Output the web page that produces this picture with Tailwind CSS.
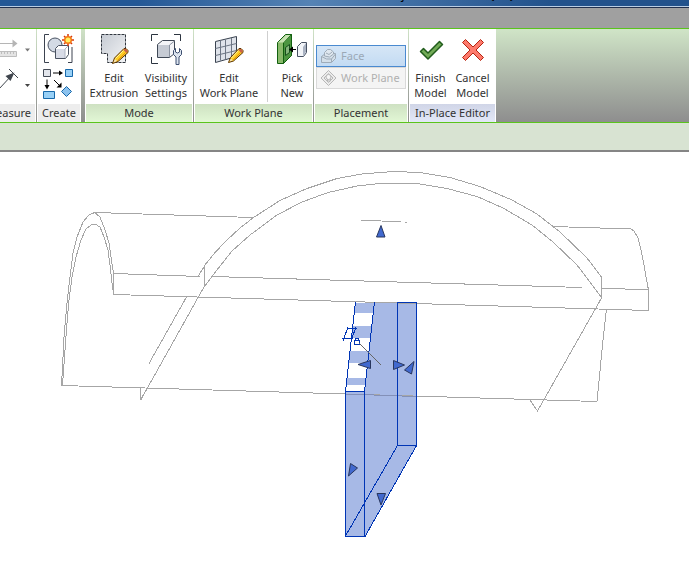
<!DOCTYPE html>
<html lang="en">
<head>
    <meta charset="UTF-8">
    <meta name="viewport" content="width=device-width, initial-scale=1.0">
    <title>Project1 - 3D View: {3D}</title>
    <script src="https://cdn.jsdelivr.net/npm/@tailwindcss/browser@4"></script>
</head>
<body class="bg-white overflow-x-hidden text-[11px] text-[#333333] font-['Noto_Sans','Open_Sans',sans-serif]">
    <!-- title bar -->
    <header class="h-2 flex items-end justify-center pb-1 overflow-hidden bg-linear-to-r from-[#245896] from-20% via-[#5583b5] via-45% to-[#22528c] to-80% border-b border-[#22304d] shadow-[inset_0_-1px_#b9cde4]">
        <span class="pl-52 leading-4 text-xs text-black whitespace-nowrap">Project1 - 3D View: {3D}</span>
    </header>
    <div class="h-5 bg-[#a0a0a0]"></div>

    <!-- ribbon -->
    <nav class="flex overflow-hidden border-y border-[#5ac41c] bg-linear-to-b from-[#d0e5c7] to-[#8e8e8e]">
        <section class="w-9 shrink-0 flex flex-col bg-white">
            <div class="flex-1">
                <button class="block" aria-label="Measure">
                    <svg class="w-9 h-9" viewBox="0 0 36 36" fill="none">
                        <path d="M0 14.500H13" stroke="#b5b5b5"/>
                        <path d="M12.500 10.500v8l5-4z" fill="#b5b5b5"/>
                        <path d="M-2 22.500H16.500v5H-2z" fill="#e4e4e4" stroke="#bdbdbd"/>
                        <path d="M1.500 23v2M4.500 23v2M7.500 23v2M10.500 23v2M13.500 23v2" stroke="#bdbdbd"/>
                        <path d="M25 19.500h5l-2.500 3z" fill="#777"/>
                    </svg>
                </button>
                <button class="block" aria-label="Aligned dimension">
                    <svg class="w-9 h-9" viewBox="0 0 36 36" fill="none">
                        <path d="M-1 24L12 10M9 4l9 9" stroke="#3f454d"/>
                        <path d="M14.500 7.500L5.500 11l5 5z" fill="#3f454d"/>
                        <path d="M25 19h5l-2.500 3z" fill="#444"/>
                    </svg>
                </button>
            </div>
            <h2 class="flex justify-end pr-1 mr-px leading-[18px] bg-[#ededed] whitespace-nowrap">Measure</h2>
        </section>
        <div class="w-px shrink-0 bg-linear-to-b from-[#cfe2c6] to-[#8e8e8e]"></div>

        <section class="w-11 shrink-0 flex flex-col bg-white px-px">
            <div class="flex-1 flex flex-col items-center">
                <button class="pt-1" aria-label="Create">
                    <svg class="w-8 h-8" viewBox="0 0 32 32" fill="none">
                        <path d="M6 1.500H1.500v28H6M25 29.500h4V14" stroke="#3c4350"/>
                        <circle cx="12" cy="12" r="7" fill="#d3dae5" stroke="#4a5362"/>
                        <path d="M12.500 15.500l3-3h10v9l-3 4h-10z" fill="#fff" stroke="#4a5362"/>
                        <path d="M13 16h9v9h-9z" fill="#d8dce7"/>
                        <path d="M22 16v9M22 16l3-3" stroke="#aeb5c2"/>
                        <path d="M25 1v12M19 7h12M21 3l8 8M29 3l-8 8" stroke="#d8380c" stroke-width="1.500"/>
                        <circle cx="25" cy="7" r="4" fill="#f47a12"/>
                        <circle cx="25" cy="7" r="2.500" fill="#ffef62"/>
                    </svg>
                </button>
                <button class="pt-1" aria-label="Component">
                    <svg class="w-8 h-8" viewBox="0 0 32 32" fill="none">
                        <path d="M.5.500h7v7h-7z" fill="#e3e6ec" stroke="#434a56"/>
                        <path d="M22.500.500h7v7h-7z" fill="#98d0f6" stroke="#1768aa"/>
                        <path d="M.5 22.500h11v7h-11z" fill="#98d0f6" stroke="#1768aa"/>
                        <path d="M23.500 17.500l5 5-5 5-5-5z" fill="#8cc2ee" stroke="#1768aa"/>
                        <path d="M10 4h7M4 10.500v7M11 11l5 5" stroke="#000"/>
                        <path d="M16 1.500l4 2.500-4 2.500zM1.500 16h5l-2.500 4.500zM18.500 18.500v-5l-5 5z" fill="#000"/>
                    </svg>
                </button>
            </div>
            <h2 class="text-center leading-[18px] bg-[#ededed]">Create</h2>
        </section>
        <div class="w-1 shrink-0 bg-linear-to-b from-[#cfe2c6] to-[#8e8e8e]"></div>

        <section class="w-27 shrink-0 flex flex-col bg-white px-px">
            <div class="flex-1 flex justify-center gap-1 pt-1 pb-1 pl-0.5">
                <button class="w-12 flex flex-col items-center gap-[5px] leading-[15px]">
                    <svg class="w-8 h-8" viewBox="0 0 32 32" fill="none">
                        <defs><linearGradient id="sheet" x2="1" y2="1"><stop stop-color="#c6cbd3"/><stop offset="1" stop-color="#f3f4f6"/></linearGradient></defs>
                        <path d="M3.500 1.500h24v28h-18v-9h-6z" fill="url(#sheet)" stroke="#30363f" stroke-dasharray="3 1"/>
                        <path d="M14.500 30.500l2-5.500L26 15.500h2l2 2v2L20 28.500z" fill="#ffcf24" stroke="#5b3406" stroke-linejoin="round"/>
                        <path d="M17.500 25.500l8-8" stroke="#fff0a0"/>
                        <path d="M19.500 27.500l8-8" stroke="#e8930c"/>
                        <path d="M15.500 29.500l1.500-3.500 2 2z" fill="#f3e2c0"/>
                        <path d="M25.500 17l1-1h1.500l1.500 1.500V19l-1 1z" fill="#c9604a"/>
                    </svg>
                    <span>Edit<br>Extrusion</span>
                </button>
                <button class="w-12 flex flex-col items-center gap-[5px] leading-[15px]">
                    <svg class="w-8 h-8" viewBox="0 0 32 32" fill="none">
                        <path d="M1.500 8V1.500H8M24 1.500h6.500V8M1.500 24v6.500H8" stroke="#2c3440"/>
                        <path d="M7.500 11.500l5-4h12v13l-5 4h-12z" fill="#f4f5f8" stroke="#3f4856"/>
                        <path d="M8 12h11v12H8z" fill="#c6cbd4"/>
                        <path d="M19.500 12v12M19.500 12l5-4" stroke="#8b93a1"/>
                        <path d="M25.500 15.500v3.500l2 1 2-1v-3.500l2 2v4l-2.500 2.500v7.500h-3V24l-2.500-2.500v-4z" fill="#dbe3ee" stroke="#3d4f70" stroke-linejoin="round"/>
                    </svg>
                    <span>Visibility<br>Settings</span>
                </button>
            </div>
            <h2 class="text-center leading-[18px] bg-linear-to-b from-[#cee1c2] to-[#e2f7d5]">Mode</h2>
        </section>
        <div class="w-px shrink-0 bg-linear-to-b from-[#cfe2c6] to-[#8e8e8e]"></div>

        <section class="w-[119px] shrink-0 flex flex-col bg-white px-px">
            <div class="flex-1 flex">
                <button class="w-18 pt-1 pb-1 pr-1 flex flex-col items-center gap-[5px] leading-[15px]">
                    <svg class="w-8 h-8" viewBox="0 0 32 32" fill="none">
                        <path d="M2.500 8.500L23.500 3.500v20L2.500 29.500z" fill="#dfe3ea" stroke="#3a4350"/>
                        <path d="M7.500 7.500v20M12.500 6.500v20M18.500 5v20M2.500 15.500l21-5M2.500 22.500l21-5" stroke="#6d7684"/>
                        <path d="M15.500 29.500l2-5L26 15.500h2l2 2v2L20.500 28z" fill="#ffcf24" stroke="#5b3406" stroke-linejoin="round"/>
                        <path d="M18.500 25l7-7.500" stroke="#fff0a0"/>
                        <path d="M20 27l7.500-7.500" stroke="#e8930c"/>
                        <path d="M16.500 28.500l1.500-3 1.500 2z" fill="#f3e2c0"/>
                        <path d="M25.500 17l1-1h1.500l1.500 1.500V19l-1 1z" fill="#c9604a"/>
                    </svg>
                    <span>Edit<br>Work Plane</span>
                </button>
                <div class="w-px my-0.5 bg-[#cfcfcf]"></div>
                <button class="flex-1 pt-1 pb-1 pl-1 flex flex-col items-center gap-[5px] leading-[15px]">
                    <svg class="w-8 h-8" viewBox="0 0 32 32" fill="none">
                        <path d="M1.500 9.500l8-8h6v21l-8 8h-6z" fill="#89b96b" stroke="#12600f"/>
                        <path d="M7.500 9.500l8-8v21l-8 8z" fill="#4c9540" stroke="#12600f"/>
                        <path d="M2 9.500h5.500l7-7.500H10z" fill="#c7e3b2"/>
                        <path d="M9.500 14.500l4-3v8l-4 3z" fill="#84b57a" stroke="#174f1b"/>
                        <path d="M16 16.500h4" stroke="#000"/>
                        <path d="M13 16.500l4-3v6z" fill="#000"/>
                        <path d="M21.500 13.500l4-4h5v10l-3 4h-6z" fill="#f2f4f8" stroke="#465062"/>
                        <path d="M27 14l3-4v9l-3 4z" fill="#aab3c3"/>
                    </svg>
                    <span>Pick<br>New</span>
                </button>
            </div>
            <h2 class="text-center leading-[18px] bg-linear-to-b from-[#cee1c2] to-[#e2f7d5]">Work Plane</h2>
        </section>
        <div class="w-px shrink-0 bg-linear-to-b from-[#cfe2c6] to-[#8e8e8e]"></div>

        <section class="w-[94px] shrink-0 flex flex-col bg-white px-px">
            <div class="flex-1 pt-4 px-px text-[#b0b0b0]">
                <button class="w-full h-[22px] pl-1 flex items-center gap-1 border border-[#4a8ad0] bg-linear-to-b from-[#d6e6f6] to-[#c3dbf3] text-[#9ba8b6]" disabled>
                    <svg class="w-4 h-4" viewBox="0 0 16 16" fill="none" stroke="#9eabb8">
                        <path d="M.5 8.500l4-3h10v5l-4 4H.500z" fill="#d4dfe9"/>
                        <path d="M.5 8.500l5 2.500h5l4-5M10.500 11v3"/>
                        <path d="M3.500 8V4.500l3-3h3l3 2.500v2l-4 3z" fill="#dfe7ef"/>
                        <path d="M5 5l3 1.500L11 4"/>
                    </svg>
                    Face
                </button>
                <button class="w-full h-[22px] pl-1 flex items-center gap-1 border border-[#d9d9d9] bg-[#f4f4f4] whitespace-nowrap" disabled>
                    <svg class="w-4 h-4 shrink-0" viewBox="0 0 16 16" fill="none" stroke="#b7b7b7">
                        <path d="M7.500.500l7.500 7.500-7.500 7.500L0 8z" fill="#ececec"/>
                        <path d="M7.500 3.500L12 8l-4.500 4.500L3 8z"/>
                        <circle cx="7.500" cy="7" r="2.500" fill="#f6f6f6"/>
                        <path d="M6.500 9v2h3V9"/>
                    </svg>
                    Work Plane
                </button>
            </div>
            <h2 class="text-center leading-[18px] bg-linear-to-b from-[#cee1c2] to-[#e2f7d5]">Placement</h2>
        </section>
        <div class="w-px shrink-0 bg-linear-to-b from-[#cfe2c6] to-[#8e8e8e]"></div>

        <section class="w-[87px] shrink-0 flex flex-col bg-white px-px">
            <div class="flex-1 flex justify-center gap-1 pt-1 pb-1">
                <button class="w-9 flex flex-col items-center gap-[5px] leading-[15px]">
                    <svg class="w-8 h-8" viewBox="0 0 32 32" fill="none">
                        <path d="M5.500 18.500l3-3 4.500 4.500L24.500 8.500l3 3L13 26z" fill="#72ab57" stroke="#215c1c" stroke-width="1.500" stroke-linejoin="round"/>
                    </svg>
                    <span>Finish<br>Model</span>
                </button>
                <button class="w-10 flex flex-col items-center gap-[5px] leading-[15px]">
                    <svg class="w-8 h-8" viewBox="0 0 32 32" fill="none">
                        <path d="M5.500 9.500l3-3 7.500 7.500 7.500-7.500 3 3L19 17l7.500 7.500-3 3L16 20l-7.500 7.500-3-3L13 17z" fill="#fd7a6c" stroke="#b5230f" stroke-linejoin="round"/>
                    </svg>
                    <span>Cancel<br>Model</span>
                </button>
            </div>
            <h2 class="text-center leading-[18px] whitespace-nowrap bg-linear-to-b from-[#d0d5e7] to-[#e3e8f8]">In-Place Editor</h2>
        </section>
    </nav>

    <!-- options bar -->
    <div class="h-[29px] bg-[#d8e3d2] border-b-2 border-[#858585]"></div>

    <!-- 3D view -->
    <main>
        <svg class="w-full block" viewBox="0 152 689 417" fill="none" stroke="#a6a6a6" shape-rendering="crispEdges" role="img" aria-label="3D view of two crossing vaults with a selected extrusion">
            <!-- selected extrusion -->
            <g fill="#a7b9e6" stroke="none">
                <path d="M374.500 302.500H416.500V445.500L365 536.500H345.500V391.500H365z"/>
                <path d="M355.500 303h19l-1 10h-19zM353 326h19l-1.500 12h-19zM350 351h19l-1 12h-19.500zM347 378h19l-1 7h-19z"/>
            </g>
            <!-- left vault -->
            <path d="M61.500 385.500L63 357 64 337 67 303 70 277 73 253 77 237 83 222 89 215 94.500 212.500 100 217 105 230 109 243 111 257 113.500 273.500V294.500"/>
            <path d="M62.500 385L65 350 67 323 69 300 72 277 76 257 81 240 86 229 91 225 95 224 100 227 104 237 108 250 110 265 112 283 113.500 294"/>
            <path d="M95 212.500L253 217.500M113.500 273.500L200 276.500M198 276.500L204.500 266V286M212 276.500L582 287.500M113.500 294.500L648.500 310.500M61.500 385.500L597 401.500"/>
            <path d="M186.500 297L149 363.500M204.500 286L141 399.500M140.500 388V399.500L147 389"/>
            <!-- main vault -->
            <path d="M204.500 265.500L215 252.500 227 240 240 228 253.500 217.500 280 200.500 307 188.500 337 178.500 362 174 393 171.500 420 172.500 450 177.500 480 186.500 512 200 537 214 560 232 587 258 601.500 277"/>
            <path d="M204.500 286.500L213 275 232 251 250 235 277 215 302 202 328 192.500 357 186 380 183.500 417 183.500 447 188.500 477 196.500 503 208 532 225 553 242 577 265 601.500 297.500"/>
            <!-- right vault -->
            <path d="M601.500 277V298L537.500 411 530 400M552.500 226.500L631 229 634 231 638 238 641 250 644 265 646 277 648.500 290V310.500M601 288.500L648.500 289.500M606.500 309L603 340 597 401.500"/>
            <path d="M361 220.500L401 221.500M405 222.500h2"/>
            <path d="M345.500 394L416 396.500" stroke="#8390b8"/>
            <!-- extrusion edges -->
            <g stroke="#0035b5">
                <path d="M355.500 302L345.500 391.500V536.500H365L416.500 445.500V303L397.500 302.500V445.500H416.500M374.500 302L364.500 391.500V536.500M345.500 391.500H364.500M397.500 445.500L345.500 536"/>
                <path d="M346.500 328.500H357M342 338.500H353M348 327L343 341M356 327L351 341"/>
                <path d="M354.500 340.500h5v4h-5zM355.500 340v-2h3v2"/>
            </g>
            <path d="M359 343L381 365" stroke="#666" shape-rendering="auto"/>
            <!-- shape handles -->
            <g fill="#4169cf" stroke="#28365e" shape-rendering="auto">
                <path d="M381 225.500L376.500 237h8.500z"/>
                <path d="M358 364.500L370.500 360.500v8z"/>
                <path d="M393.500 360.500v9l11-4.500z"/>
                <path d="M404.500 370L414 361.500 411.500 374z"/>
                <path d="M350.500 463.500L357.500 468 348.500 476z"/>
                <path d="M377 493.500h8.500L381 505z"/>
            </g>
        </svg>
    </main>
</body>
</html>
